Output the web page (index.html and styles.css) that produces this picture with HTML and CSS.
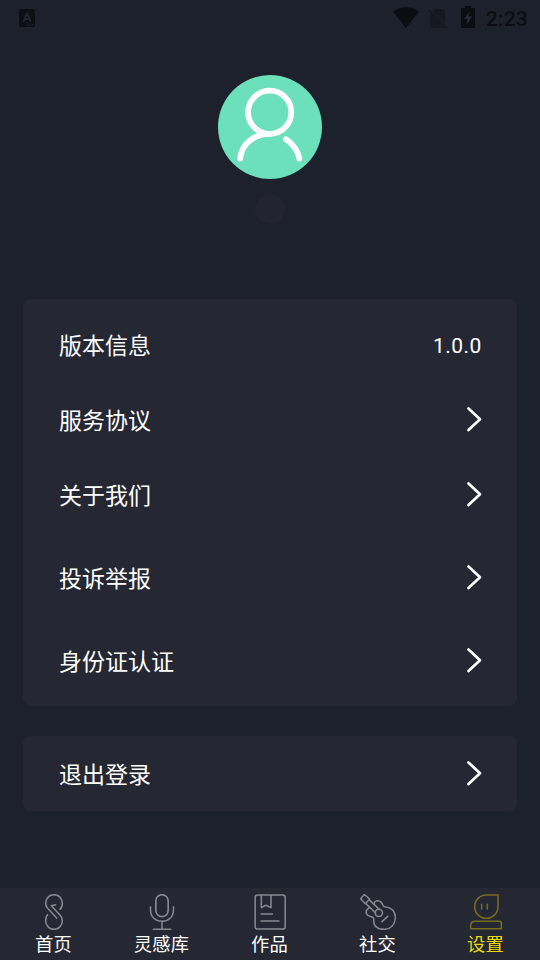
FILE: index.html
```
<!DOCTYPE html>
<html lang="zh-CN">
<head>
<meta charset="utf-8">
<title>设置</title>
<link rel="stylesheet" href="styles.css">
</head>
<body>
<div class="screen">
  <header class="status">
    <svg class="app-badge" viewBox="0 0 16 18"><rect width="16" height="18" rx="1.5" fill="#0d0f15"/><path d="M4.400 12.600 8 4.600l3.600 8M5.800 10.200h4.400" fill="none" stroke="#202735" stroke-width="1.800"/><path d="M8 16h7" stroke="#292c35" stroke-width="1" stroke-dasharray="1.500 .8"/></svg>
    <div class="status-right">
      <svg class="wifi" viewBox="0 0 26 21"><path d="M0 4.500C7-1.300 19-1.300 26 4.500L13 21Z" fill="#0b0d12"/></svg>
      <svg class="sim" viewBox="0 0 20 21"><path d="M7 1h8.500q1.500 0 1.500 1.500v13.300L4.800 3.400ZM2.500 5 16.600 19.200q-.4.800-1.300.8H4q-1.500 0-1.500-1.500Z" fill="#151821"/><path d="m.8 1.800 18 18.600" stroke="#151821" stroke-width="1.700"/></svg>
      <svg class="battery" viewBox="0 0 14 22"><path d="M4 0h6v2h4v20H0V2h4Z" fill="#0b0d12"/><path d="M9 5 3 13h3.500l-1.200 6.500 5.700-9H7.500Z" fill="#252a36"/></svg>
      <span class="time">2:23</span>
    </div>
  </header>

  <section class="profile">
    <svg class="avatar" viewBox="0 0 104 104">
      <circle cx="52" cy="52" r="52" fill="#6ce0ba"/>
      <g fill="none" stroke="#fff" stroke-width="5.800" stroke-linecap="round">
        <circle cx="51.700" cy="37.300" r="21.600"/>
        <path d="M52 58.800C36 58.800 23.500 69 22.200 83.500M68 64.200C75 69 79.500 75.500 81.400 83.500"/>
      </g>
    </svg>
    <div class="name-pill"></div>
  </section>

  <main class="cards">
    <div class="card card-main">
      <div class="row"><span>版本信息</span><span class="version">1.0.0</span></div>
      <div class="row"><span>服务协议</span><svg class="chevron" viewBox="0 0 16 26"><path d="m2.500 2.500 11.500 10.800L2.500 24"/></svg></div>
      <div class="row"><span>关于我们</span><svg class="chevron" viewBox="0 0 16 26"><path d="m2.500 2.500 11.500 10.800L2.500 24"/></svg></div>
      <div class="row spaced"><span>投诉举报</span><svg class="chevron" viewBox="0 0 16 26"><path d="m2.500 2.500 11.500 10.800L2.500 24"/></svg></div>
      <div class="row spaced"><span>身份证认证</span><svg class="chevron" viewBox="0 0 16 26"><path d="m2.500 2.500 11.500 10.800L2.500 24"/></svg></div>
    </div>
    <div class="card">
      <div class="row"><span>退出登录</span><svg class="chevron" viewBox="0 0 16 26"><path d="m2.500 2.500 11.500 10.800L2.500 24"/></svg></div>
    </div>
  </main>

  <nav class="tabs">
    <a class="tab">
      <svg viewBox="108 42 108 108"><path d="M180 88C187 82 187 75 187 69A25 25 0 0 0 137 69C137 77 139 82 145 87L170 114M143 104C137 109 137 116 137 123A25 25 0 0 0 187 123C187 116 185 110 179 104L154 77L167 74"/></svg>
      <span>首页</span>
    </a>
    <a class="tab">
      <svg viewBox="432 42 108 108"><rect x="467.500" y="44" width="37" height="66" rx="18.500" stroke-width="5"/><path d="M451.500 80V89C451.500 111 467 124 486 124S520.500 111 520.500 89V80M486 124V148M460 148H512"/></svg>
      <span>灵感库</span>
    </a>
    <a class="tab">
      <svg viewBox="156 42 108 108"><rect x="165.500" y="45" width="90" height="102" rx="7"/><path d="M184 46V83L190 80Q198 72 206 80L213 83V46M183 102H217M183 123H237"/></svg>
      <span>作品</span>
    </a>
    <a class="tab">
      <svg viewBox="60 42 108 108"><path d="M73 43.500 89 57 76 71 62 56ZM87 59 118 88M77 70 107 99"/><circle cx="116.500" cy="98.500" r="11"/><path d="M101 72C104 61 116 59 124 67C131 74 125 80 137 81C154 82 166 94 166 111C166 133 153 148 130 148C112 148 100 137 101 121C102 111 98 111 90 109C79 107 75 96 82 88L89 82M126 125 143 109"/></svg>
      <span>社交</span>
    </a>
    <a class="tab active">
      <svg viewBox="384 42 108 108"><path d="M439 45H474V80A35 35 0 1 1 439 45ZM425 73V87M442 73V87M406 124H479Q484 124 484 129V146H392V138Q392 124 406 124Z"/></svg>
      <span>设置</span>
    </a>
  </nav>
</div>
</body>
</html>
```
FILE: styles.css
```
* { box-sizing: border-box; }
body {
  margin: 0;
  background: #1d212c;
  color: #fff;
  font-family: Roboto, "Noto Sans CJK SC", sans-serif;
}
.screen {
  height: 960px;
  display: flex;
  flex-direction: column;
}
svg { display: block; }
.status {
  height: 36px;
  padding: 0 12px 0 19px;
  display: flex;
  align-items: center;
  justify-content: space-between;
}
.app-badge { width: 16px; height: 18px; }
.status-right { display: flex; align-items: center; }
.wifi { width: 26px; height: 21px; margin-bottom: 1px; }
.sim { width: 20px; height: 21px; margin-left: 9px; }
.battery { width: 14px; height: 22px; margin: 0 11px 2px 13px; }
.time {
  color: #0b0d12;
  font-size: 21px;
  font-weight: 500;
  line-height: 24px;
  letter-spacing: 0.25px;
  padding-top: 2px;
}
.profile {
  height: 263px;
  padding-top: 39px;
  display: flex;
  flex-direction: column;
  align-items: center;
}
.avatar { width: 104px; height: 104px; }
.name-pill {
  width: 30px;
  height: 30px;
  margin-top: 15px;
  border-radius: 50%;
  background: #222530;
}
.cards {
  padding: 0 23px;
  display: flex;
  flex-direction: column;
  gap: 30px;
  flex: 1;
}
.card {
  background: #252833;
  border-radius: 8px;
  padding: 0 36px;
}
.card-main { padding-top: 8px; padding-bottom: 8px; }
.row {
  height: 75px;
  display: flex;
  align-items: center;
  justify-content: space-between;
  padding-top: 4px;
  font-size: 23px;
  line-height: 34px;
}
.spaced { margin-top: 8px; }
.version {
  font-size: 21px;
  letter-spacing: 0.4px;
  margin: 0 -0.6px 1px 0;
}
.chevron {
  width: 16px;
  height: 26px;
  margin: 0 -1px 6px 0;
  fill: none;
  stroke: #fff;
  stroke-width: 2.7;
  stroke-linecap: round;
  stroke-linejoin: round;
}
.tabs {
  height: 72px;
  background: #252833;
  display: grid;
  grid-template-columns: repeat(5, 1fr);
}
.tab {
  display: flex;
  flex-direction: column;
  align-items: center;
  padding-top: 6px;
  font-size: 18.3px;
  line-height: 30px;
  letter-spacing: 0.3px;
}
.tab span { margin-right: 1px; }
.tab svg {
  width: 36px;
  height: 36px;
  fill: none;
  stroke: #868890;
  stroke-width: 4.6;
  stroke-linecap: round;
  stroke-linejoin: round;
}
.active { color: #e9da08; }
.active svg { stroke: #746e20; }
```
